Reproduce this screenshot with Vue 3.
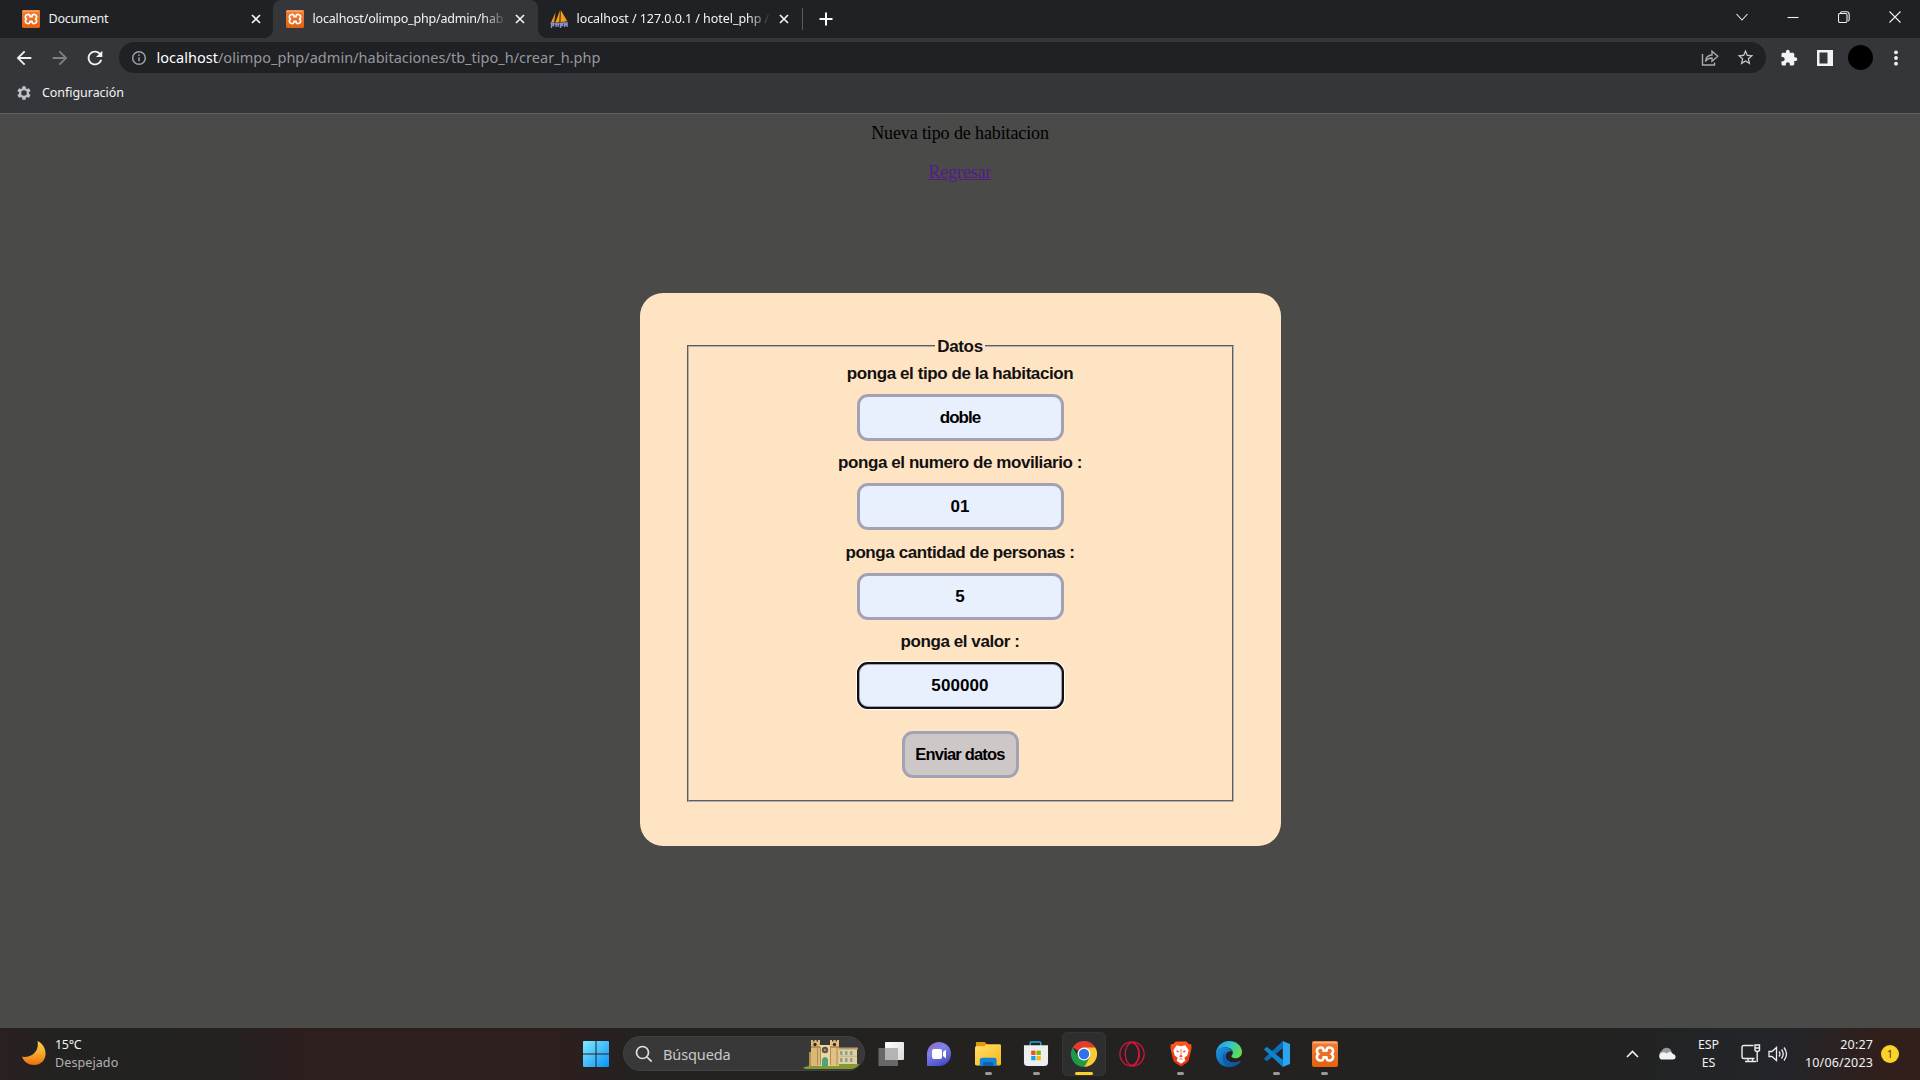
<script setup>
import { ref } from 'vue'

const fields = ref([
  { label: 'ponga el tipo de la habitacion', value: 'doble' },
  { label: 'ponga el numero de moviliario :', value: '01', tight: true },
  { label: 'ponga cantidad de personas :', value: '5', tight: true },
  { label: 'ponga el valor :', value: '500000', tight: true, focus: true },
])
</script>

<template>
  <div class="screen">
    <svg class="defs" width="0" height="0">
      <defs>
        <linearGradient id="xg" x1="0" y1="0" x2="0" y2="1"><stop offset="0" stop-color="#f0803a" /><stop offset="1" stop-color="#e2620f" /></linearGradient>
        <symbol id="xampp" viewBox="0 0 26 26">
          <rect width="26" height="26" rx="2" fill="url(#xg)" />
          <rect x="1" y="1" width="24" height="1.4" fill="#f7b283" />
          <path d="M8.300 6.500C10.500 6.200 11.500 7.400 11.500 9.700h3C14.500 7.400 15.500 6.200 17.700 6.500c4 .5 4.400 4.800 1.800 6.500 2.600 1.700 2.200 6-1.800 6.500-2.200.3-3.200-.9-3.200-3.200h-3c0 2.300-1 3.500-3.200 3.200-4-.5-4.400-4.800-1.800-6.500C3.900 11.300 4.300 7 8.300 6.500z" fill="none" stroke="#fff" stroke-width="2.500" stroke-linejoin="round" />
        </symbol>
      </defs>
    </svg>

    <header class="tabs">
      <div class="tab first">
        <svg class="fav" viewBox="0 0 26 26"><use href="#xampp" /></svg>
        <span class="title t1">Document</span>
        <svg class="x" viewBox="0 0 10 10"><path d="M1 1l8 8M9 1l-8 8" /></svg>
      </div>
      <div class="tab active">
        <svg class="fav" viewBox="0 0 26 26"><use href="#xampp" /></svg>
        <span class="title t2">localhost/olimpo_php/admin/hab</span>
        <svg class="x" viewBox="0 0 10 10"><path d="M1 1l8 8M9 1l-8 8" /></svg>
      </div>
      <div class="tab third">
        <svg class="fav" viewBox="0 0 18 18">
          <path d="M5.500 2.500L1 12.500h3.200zM10 .500L5.300 12.500h4zM10.700 0l6.500 11-6.700 1.500z" fill="#f89c0e" />
          <path d="M.5 12.300c4 1.400 10 1 17-.8l-.5 2c-5 1.500-12 1.500-16.500.5z" fill="#6c78af" />
          <path d="M1.500 18v-4.500h2v2h-2M6 12.500V17M6 14.500h2.200V17M10.500 18v-4.500h2v2h-2M14.500 17v-3.500l1.300 1.500 1.300-1.500V17" stroke="#8b94c4" stroke-width="1.300" fill="none" />
        </svg>
        <span class="title t3">localhost / 127.0.0.1 / hotel_php /</span>
        <svg class="x" viewBox="0 0 10 10"><path d="M1 1l8 8M9 1l-8 8" /></svg>
      </div>
      <i class="sep"></i>
      <svg class="plus" viewBox="0 0 14 14"><path d="M7 .5v13M.5 7h13" /></svg>
      <div class="winctl">
        <svg viewBox="0 0 12 12"><path d="M.5 3l5.500 6L11.500 3" /></svg>
        <svg viewBox="0 0 12 12"><path d="M.5 6.500h11" /></svg>
        <svg viewBox="0 0 12 12"><rect x=".5" y="2.500" width="8.500" height="9" rx="1.500" /><path d="M2.500 2.500V2Q2.500.700 4 .700h4.500Q11.200.700 11.200 3.500v5q0 1.200-1.200 1.500" /></svg>
        <svg viewBox="0 0 12 12"><path d="M.5.5l11 11M11.500.5l-11 11" /></svg>
      </div>
    </header>

    <div class="toolbar">
      <svg class="nav" viewBox="0 0 24 24"><path d="M20 11H7.830l5.590-5.590L12 4l-8 8 8 8 1.410-1.410L7.830 13H20v-2z" /></svg>
      <svg class="nav dim" viewBox="0 0 24 24"><path d="M4 11h12.170l-5.590-5.590L12 4l8 8-8 8-1.410-1.410L16.170 13H4v-2z" /></svg>
      <svg class="nav" viewBox="0 0 24 24"><path d="M17.650 6.350C16.200 4.900 14.210 4 12 4c-4.420 0-7.990 3.580-7.990 8s3.570 8 7.990 8c3.730 0 6.840-2.550 7.730-6h-2.080c-.820 2.330-3.040 4-5.650 4-3.310 0-6-2.690-6-6s2.690-6 6-6c1.660 0 3.140.690 4.220 1.780L13 11h7V4l-2.350 2.350z" /></svg>
      <div class="omni">
        <svg class="info" viewBox="0 0 16 16"><circle cx="8" cy="8" r="6.300" /><path d="M8 7.300v4M8 4.500v1.600" /></svg>
        <span class="url"><b>localhost</b>/olimpo_php/admin/habitaciones/tb_tipo_h/crear_h.php</span>
        <svg class="share" viewBox="0 0 18 18"><path d="M1.500 5v11h12v-2.500M4.500 12.500c.3-4.500 3-6.300 6.500-6.500V2.300l5.800 5-5.800 5V9c-3 0-5 1-6.500 3.500z" /></svg>
        <svg class="star" viewBox="0 0 24 24"><path d="M22 9.240l-7.190-.620L12 2 9.190 8.630 2 9.240l5.460 4.730L5.820 21 12 17.270 18.180 21l-1.630-7.030L22 9.240zM12 15.400l-3.760 2.270 1-4.280-3.320-2.880 4.380-.380L12 6.100l1.710 4.040 4.380.380-3.320 2.880 1 4.280L12 15.400z" /></svg>
      </div>
      <svg class="ext" viewBox="0 0 24 24"><path d="M20.500 11H19V7c0-1.100-.9-2-2-2h-4V3.500C13 2.120 11.880 1 10.500 1S8 2.120 8 3.500V5H4c-1.100 0-1.990.9-1.990 2v3.800H3.500c1.490 0 2.700 1.210 2.700 2.700s-1.210 2.700-2.700 2.700H2V20c0 1.100.9 2 2 2h3.800v-1.500c0-1.490 1.210-2.700 2.700-2.700 1.490 0 2.700 1.210 2.700 2.700V22H17c1.100 0 2-.9 2-2v-4h1.500c1.380 0 2.500-1.120 2.500-2.500S21.880 11 20.500 11z" /></svg>
      <svg class="panel" viewBox="0 0 16 16"><path fill-rule="evenodd" d="M0 0h16v16H0zM2.500 2.500v11h8v-11z" /></svg>
      <i class="avatar"></i>
      <svg class="dots" viewBox="0 0 4 16"><circle cx="2" cy="2.300" r="1.900" /><circle cx="2" cy="8" r="1.900" /><circle cx="2" cy="13.700" r="1.900" /></svg>
    </div>

    <div class="bookmarks">
      <svg viewBox="0 0 24 24"><path fill-rule="evenodd" d="M19.430 12.980c.040-.320.070-.640.070-.980s-.030-.660-.070-.980l2.110-1.650c.190-.150.240-.420.120-.640l-2-3.460c-.120-.220-.390-.300-.610-.220l-2.490 1c-.520-.400-1.080-.730-1.690-.980l-.380-2.650C14.460 2.180 14.250 2 14 2h-4c-.250 0-.460.180-.490.420l-.380 2.650c-.610.250-1.170.590-1.690.980l-2.490-1c-.230-.090-.490 0-.610.220l-2 3.460c-.130.220-.070.490.120.640l2.110 1.650c-.040.320-.070.650-.070.980s.030.660.070.980l-2.110 1.650c-.190.150-.240.420-.120.640l2 3.460c.120.220.390.300.610.220l2.490-1c.520.400 1.080.730 1.690.980l.380 2.650c.030.240.240.420.490.420h4c.250 0 .460-.180.490-.420l.380-2.650c.610-.250 1.170-.590 1.690-.980l2.490 1c.230.090.490 0 .610-.220l2-3.460c.120-.220.070-.490-.120-.640l-2.110-1.650zM12 16.200a4.200 4.200 0 1 1 0-8.400 4.200 4.200 0 0 1 0 8.400z" /></svg>
      <span>Configuración</span>
    </div>

    <main class="page">
      <p class="heading">Nueva tipo de habitacion</p>
      <a class="back">Regresar</a>
      <form class="card" @submit.prevent>
        <fieldset>
          <legend>Datos</legend>
          <div v-for="f in fields" :key="f.label" class="field">
            <label>{{ f.label }}</label>
            <div class="input" :class="{ focus: f.focus, digits: f.tight }">{{ f.value }}</div>
          </div>
          <button type="submit">Enviar datos</button>
        </fieldset>
      </form>
    </main>

    <footer class="taskbar">
      <div class="weather">
        <svg viewBox="0 0 24 24">
          <defs><linearGradient id="moon" x1="0" y1="0" x2="0" y2="1"><stop offset="0" stop-color="#fbd04b" /><stop offset=".5" stop-color="#f6aa2b" /><stop offset="1" stop-color="#ed6d12" /></linearGradient></defs>
          <path d="M15.500 0C27 5 26.500 24 12 24 6.500 24 2 21 0 15.800 10 17 17.500 10 15.500 0z" fill="url(#moon)" />
        </svg>
        <div><p>15°C</p><p class="muted">Despejado</p></div>
      </div>

      <div class="apps">
        <svg class="win" viewBox="0 0 26 26">
          <defs><linearGradient id="wg" x1="0" y1="0" x2="1" y2="1"><stop offset="0" stop-color="#7feaff" /><stop offset="1" stop-color="#0b91f5" /></linearGradient></defs>
          <path d="M0 1q0-1 1-1h11.500v12.500H0zM13.500 0H25q1 0 1 1v11.500H13.500zM0 13.500h12.500V26H1q-1 0-1-1zM13.500 13.500H26V25q0 1-1 1H13.500z" fill="url(#wg)" />
        </svg>
        <div class="search">
          <svg class="mag" viewBox="0 0 18 18"><circle cx="7.500" cy="7.500" r="6" /><path d="M12 12l4.700 4.700" /></svg>
          <span>Búsqueda</span>
          <svg class="castle" viewBox="0 0 56 32">
            <path d="M0 29.500Q26 22 56 26q-1 4-7 5H2z" fill="#7f9b32" />
            <path d="M34 10h20v16H34z" fill="#e3cfa4" /><path d="M34 9.500h21v2H34z" fill="#b99c6a" />
            <path d="M37 13h2.500v4H37zm5 0h2.500v4H42zm5 0h2.500v4H47zm-10 7h2.500v4H37zm5 0h2.500v4H42zm5 0h2.500v4H47z" fill="#87a68c" />
            <path d="M34 18.200h20" stroke="#c8b085" />
            <path d="M6 14h6v14H6z" fill="#b98f4e" />
            <path d="M8 2h2v1.500h1.500V2h2v1.500H15V2h2v26H8z" fill="#dcb878" />
            <path d="M27 2h2v1.500h1.500V2h2v1.500H34V2h2v26h-9z" fill="#e3c183" />
            <path d="M17 7h10v21H17z" fill="#edd7a1" />
            <path d="M8 9h9M27 9h9" stroke="#8d6534" /><path d="M14.500 9v18M34 9v18M17.500 9v18M27.500 9v18" stroke="#b08a50" />
            <circle cx="12" cy="6.500" r="1.700" fill="#3b2d20" /><circle cx="31.500" cy="6.500" r="1.700" fill="#3b2d20" />
            <circle cx="22" cy="12" r="3.200" fill="#5d5648" /><circle cx="22" cy="12" r="1.300" fill="#9b8d70" />
            <path d="M19 28v-7q3-4 6 0v7z" fill="#4fa37b" />
          </svg>
        </div>
        <svg class="task" viewBox="0 0 26 26">
          <defs><linearGradient id="tg" x1="0" y1="0" x2="1" y2="1"><stop offset="0" stop-color="#fff" /><stop offset="1" stop-color="#dadada" /></linearGradient></defs>
          <rect x="7" y="1" width="19" height="18" rx="1" fill="url(#tg)" /><path d="M.5 7H7v12h13v6H.500z" fill="#686868" /><path d="M7 7h13v12H7z" fill="#b4b4b4" />
        </svg>
        <svg class="chat" viewBox="0 0 24 24">
          <defs><linearGradient id="cg" x1="0" y1="0" x2=".5" y2="1"><stop offset="0" stop-color="#9a63b0" /><stop offset=".45" stop-color="#7b83eb" /><stop offset="1" stop-color="#4b4fc4" /></linearGradient></defs>
          <path d="M12 0a12 12 0 1 1 0 24H0V12A12 12 0 0 1 12 0z" fill="url(#cg)" /><rect x="5" y="7" width="10" height="10" rx="2" fill="#fff" /><path d="M16 10l3-2.500v9L16 14z" fill="#fff" />
        </svg>

        <div class="app run">
          <svg viewBox="0 0 27 27">
            <defs><linearGradient id="fg" x1="0" y1="0" x2="1" y2="1"><stop offset="0" stop-color="#ffdf6c" /><stop offset="1" stop-color="#f9b916" /></linearGradient></defs>
            <path d="M1 2q0-1 1-1h8l3 3v6H1z" fill="#dc9a10" /><path d="M0 7q0-1.500 1.500-1.500h8L12 3.500h13.500Q27 3.500 27 5v19q0 1.500-1.500 1.500h-24Q0 25.500 0 24z" fill="url(#fg)" />
            <path d="M5 26v-6q0-2.500 2.500-2.500H20q2.500 0 2.500 2.500v6z" fill="#1684d6" /><path d="M8.500 22H19v4H8.500z" fill="#0b62ae" />
          </svg>
        </div>
        <div class="app run">
          <svg viewBox="0 0 27 27">
            <path d="M7.500 6V2q0-1 1-1h9q1 0 1 1v4" fill="none" stroke="#29a8e0" stroke-width="1.500" />
            <path d="M1 4.500h25V22q0 4-4 4H5q-4 0-4-4z" fill="#eee" />
            <path d="M8.500 10h4.500v4.500H8.500z" fill="#f1511b" /><path d="M14 10h4.500v4.500H14z" fill="#7eba00" /><path d="M8.500 15.500h4.500V20H8.500z" fill="#0aa5ee" /><path d="M14 15.500h4.500V20H14z" fill="#fbb80c" />
          </svg>
        </div>
        <div class="app chrome">
          <svg viewBox="0 0 48 48">
            <path d="M24 24L3.200 12A24 24 0 0 1 44.800 12z" fill="#e33b2e" /><path d="M24 24V12h20.800A24 24 0 0 1 24 48l10.400-18z" fill="#fcc934" /><path d="M24 24l10.400 6L24 48A24 24 0 0 1 3.200 12l10.400 18z" fill="#1e9b48" />
            <circle cx="24" cy="24" r="12" fill="#fff" /><circle cx="24" cy="24" r="9.600" fill="#2d74ea" />
          </svg>
        </div>
        <div class="app">
          <svg viewBox="0 0 27 27" fill="none" stroke="#d4173f" stroke-width="1.300"><circle cx="13.500" cy="13.500" r="12.600" /><ellipse cx="13.500" cy="13.500" rx="7" ry="11.800" /><path d="M13 1.500C23 2.500 24 24 13.500 25.500M16 3c7 4 7 17 0 21" /></svg>
        </div>
        <div class="app run">
          <svg viewBox="0 0 27 27">
            <defs><linearGradient id="bg" x1="0" y1="0" x2="0" y2="1"><stop offset="0" stop-color="#ff5a1f" /><stop offset="1" stop-color="#e8300c" /></linearGradient></defs>
            <path d="M8 .5h11l2.500 2.500 2.500.500.500 3-.5 3-2.500 10.500q-.5 1.500-2 2.500l-6 4-6-4q-1.500-1-2-2.500L3 9.500l-.5-3 .5-3L5.500 3z" fill="url(#bg)" />
            <path d="M9 4.500l4.500 1 4.500-1 3.500 5-1.500 5.500-3 2.500 1 3-4.500 3-4.500-3 1-3-3-2.500L5.500 9.500z" fill="#fff" />
            <path d="M8 9.800l3.500.7-1 1.600zM19 9.800l-3.500.7 1 1.600zM13 8.500h1l-.2 6 1.700 1.300-2 1.200-2-1.200 1.700-1.300zM11 19l2.500-1 2.500 1" fill="#f2441a" />
          </svg>
        </div>
        <div class="app">
          <svg viewBox="0 0 27 27">
            <defs>
              <linearGradient id="e1" x1="0" y1="0" x2="1" y2=".4"><stop offset="0" stop-color="#1b8fdc" /><stop offset=".5" stop-color="#2fc0d6" /><stop offset="1" stop-color="#5fdc5a" /></linearGradient>
              <linearGradient id="e2" x1="0" y1="0" x2="1" y2="1"><stop offset="0" stop-color="#1d95e3" /><stop offset="1" stop-color="#0b4fa0" /></linearGradient>
            </defs>
            <path d="M0 13C0 6 6 0 13.500 0 21 0 27 5 27 11.500c0 4-3 6.500-6.500 6.500-3 0-5-1-4.500-2.300.7-1.200 1.500-2 1.500-3.700C17.500 9 14 6.500 10 6.500 5 6.500 1 9.500 0 13z" fill="url(#e1)" />
            <path d="M0 13.500C0 9.500 4 6.500 9 6.500c4 0 7 2 8 4.500-3-1.500-7 1-7 4.500 0 4 4.500 7 9 7 2.500 0 4.500-.7 5.700-1.500.600-.3 1 .300.600.900C23 25 18.500 27 13.500 27 6 27 0 21.500 0 13.500z" fill="url(#e2)" />
            <path d="M9.500 10C5.500 13.500 5.500 23.500 13 27c5.500 0 9.500-2 11.800-5.100.5-.8 0-1.200-.6-.900C15 24.500 6.500 19 9.500 10z" fill="#0c59a4" opacity=".8" />
          </svg>
        </div>
        <div class="app run">
          <svg viewBox="0 0 27 27">
            <path d="M19.500 0v7.500L3.500 20.500q-.6.500-1.200 0L.500 19q-.600-.6 0-1.200z" fill="#0a6fb8" /><path d="M19.500 27v-7.500L3.500 6.500q-.6-.5-1.200 0L.500 8q-.600.600 0 1.200z" fill="#0f83cd" /><path d="M19.500 0L27 3v21l-7.500 3z" fill="#2aa5ee" />
          </svg>
        </div>
        <div class="app run"><svg viewBox="0 0 26 26"><use href="#xampp" /></svg></div>
      </div>

      <div class="tray">
        <svg class="up" viewBox="0 0 13 8"><path d="M1 7l5.500-5.500L12 7" /></svg>
        <svg class="cloud" viewBox="0 0 19 13"><path d="M3 9a4 4 0 0 1 1.500-5A5.500 5.500 0 0 1 14 3l1 4z" fill="#999" /><path d="M4 12.500a3.800 3.800 0 0 1 0-6.500q3-1.500 5.500.5Q14 3.500 16 7q2.700.5 2.700 3-.3 2.500-3 2.500z" fill="#f2f2f2" /></svg>
        <div class="lang"><p>ESP</p><p>ES</p></div>
        <svg class="net" viewBox="0 0 20 19"><path d="M12.500 1.500H3Q1 1.500 1 3.500v9q0 2 2 2h10.500M4 17.500h11M7 14.500v3M11.500 14.500v3" /><path d="M14 1h4.500v5.500q-2.300 2-4.500 0zM14 4h4.500M16.200 8v10" /></svg>
        <svg class="vol" viewBox="0 0 20 16"><path d="M1 5.500v5h3l4.500 4V1.500L4 5.500zM11 5.500q2 2.500 0 5M13.500 3.500q3.500 4.500 0 9M16 1.500q5 6.500 0 13" /></svg>
        <div class="clock"><p>20:27</p><p>10/06/2023</p></div>
        <span class="badge">1</span>
      </div>
    </footer>
  </div>
</template>

<style>
body { background: #4a4a48; overflow: hidden; }
</style>

<style scoped>
* { box-sizing: border-box; }
p { margin: 0; }
svg { display: block; flex: none; }
.defs { position: absolute; }
.screen { width: 1920px; height: 1080px; display: flex; flex-direction: column; background: #4a4a48; font-family: "Noto Sans", "Open Sans", sans-serif; white-space: nowrap; overflow: hidden; }

.tabs { height: 38px; flex: none; display: flex; align-items: center; background: #202124; }
.tab { height: 38px; display: flex; align-items: center; color: #f1f3f4; font-size: 12.500px; letter-spacing: -.2px; }
.first { width: 273px; padding-left: 22px; }
.active { width: 265px; padding-left: 13px; background: #35363a; border-radius: 8px 8px 0 0; position: relative; }
.active::before, .active::after { content: ""; position: absolute; bottom: 0; width: 8px; height: 8px; }
.active::before { left: -8px; background: radial-gradient(circle at 0 0, transparent 7.500px, #35363a 8px); }
.active::after { right: -8px; background: radial-gradient(circle at 100% 0, transparent 7.500px, #35363a 8px); }
.third { width: 264px; padding-left: 12px; }
.fav { width: 18px; height: 18px; }
.title { margin-left: 8.500px; width: 194px; margin-right: 8.500px; line-height: 20px; }
.t2, .t3 { -webkit-mask-image: linear-gradient(90deg, #000 88%, transparent); mask-image: linear-gradient(90deg, #000 88%, transparent); }
.t2 { letter-spacing: -.18px; }
.t3 { letter-spacing: -.06px; }
.x { width: 10px; height: 10px; stroke: #f1f3f4; stroke-width: 1.700; }
.sep { width: 1px; height: 22px; background: #5a5c60; }
.plus { width: 14px; height: 14px; margin-left: 16px; stroke: #fff; stroke-width: 2; }
.winctl { margin-left: auto; display: flex; gap: 39px; padding: 0 19px 5px 0; }
.winctl svg { width: 12px; height: 12px; fill: none; stroke: #eee; stroke-width: 1.100; }

.toolbar { height: 39px; flex: none; display: flex; align-items: center; padding: 0 0 0 13px; background: #35363a; }
.nav { width: 22px; height: 22px; margin-right: 13.500px; fill: #f1f3f4; }
.dim { fill: #808185; }
.omni { width: 1647px; height: 31px; border-radius: 16px; background: #202124; display: flex; align-items: center; padding-left: 12px; margin-left: -.5px; }
.info { width: 16px; height: 16px; fill: none; stroke: #9aa0a6; stroke-width: 1.500; }
.url { margin: -1px 0 0 9.500px; font-size: 14.500px; color: #94989d; letter-spacing: .02px; flex: 1; line-height: 22px; }
.url b { font-weight: 400; color: #fff; }
.share { width: 18px; height: 18px; fill: none; stroke: #a9abae; stroke-width: 1.400; margin-right: 17px; }
.star { width: 19px; height: 19px; fill: #c4c7ca; margin-right: 11px; }
.ext { width: 18px; height: 18px; fill: #f1f3f4; margin-left: 14px; }
.panel { width: 16px; height: 16px; fill: #f1f3f4; margin-left: 19px; }
.avatar { width: 25px; height: 25px; border-radius: 50%; background: #000; margin-left: 15px; }
.dots { width: 4px; height: 16px; fill: #f1f3f4; margin-left: 21px; }

.bookmarks { height: 37px; flex: none; display: flex; align-items: center; padding: 0 0 5px 16px; background: #35363a; border-bottom: 1px solid #606164; color: #f1f3f4; font-size: 12.500px; letter-spacing: -.05px; }
.bookmarks svg { width: 16px; height: 16px; fill: #bdc1c6; margin-right: 10px; }

.page { flex: 1; display: flex; flex-direction: column; align-items: center; font: 18px "Liberation Serif", serif; letter-spacing: -.12px; color: #000; padding-top: 9px; }
.heading { line-height: 20px; }
.back { margin-top: 19px; line-height: 20px; color: #551a8b; text-decoration: underline; }
.card { width: 641px; height: 553px; margin-top: 111px; background: #ffe4c4; border-radius: 23px; padding: 43px 47px 44px; font: bold 17px "Liberation Sans", sans-serif; color: #111; }
fieldset { height: 466px; margin: 0; padding: 7px 0 0; border: 2px groove #b0b0b2; display: flex; flex-direction: column; align-items: center; }
legend { margin: 0 auto; padding: 2px 2px 0; line-height: 18px; letter-spacing: -.35px; }
.field { display: flex; flex-direction: column; align-items: center; width: 100%; margin-bottom: 11.300px; }
label { line-height: 20px; letter-spacing: -.42px; padding-top: 1px; margin-bottom: 10px; }
.input { width: 207px; height: 47px; line-height: 41px; text-align: center; letter-spacing: -1px; color: #000; background: #e8f0fe; border: 3px solid #a3a2b5; border-radius: 11px; }
.digits { letter-spacing: .1px; }
.focus { outline: 2px solid #101010; outline-offset: -2px; box-shadow: 0 0 0 1px #fff; }
button { width: 117px; height: 47px; margin-top: 11px; padding: 0; font: inherit; font-size: 16.500px; letter-spacing: -.8px; color: #000; background: #cec7c7; border: 3px solid #a3a2b5; border-radius: 11px; }

.taskbar { height: 52px; flex: none; display: flex; align-items: center; color: #f2f2f2; font-size: 12.500px; padding-bottom: 1px; background: linear-gradient(90deg, #2a2020 0, #222221 60px, #232221 220px, #2c1f1e 300px, #2c1f1e 560px, #242220 640px, #222221 1600px, #23252a 1780px, #301f1b 1880px); }
.weather { width: 583px; display: flex; align-items: center; padding-left: 22px; line-height: 18px; letter-spacing: -.3px; }
.weather svg { width: 24px; height: 24px; margin-right: 9px; margin-top: -2px; }
.weather .muted { color: #b4b2b1; letter-spacing: .1px; }
.apps { display: flex; align-items: center; }
.win { width: 26px; height: 26px; margin-right: 14px; }
.search { width: 242px; height: 35px; border-radius: 18px; background: #393838; border: 1px solid #424141; display: flex; align-items: center; padding-left: 11px; font-size: 14.500px; color: #c8c8c8; overflow: hidden; }
.mag { width: 18px; height: 18px; fill: none; stroke: #e0e0e0; stroke-width: 1.700; margin-right: 10px; }
.search span { flex: 1; letter-spacing: -.1px; }
.castle { width: 56px; height: 32px; margin-right: 5px; }
.task { width: 26px; height: 26px; margin-left: 13px; }
.chat { width: 24px; height: 24px; margin: 0 15px 0 23px; }
.app { width: 44px; height: 44px; margin-right: 4.150px; display: flex; align-items: center; justify-content: center; position: relative; border-radius: 5px; }
.app svg { width: 26px; height: 26px; }
.run::after, .chrome::after { content: ""; position: absolute; bottom: 1px; left: 18.500px; width: 7px; height: 3px; border-radius: 2px; background: #9a9a9a; }
.chrome { background: #2e2e2e; border: 1px solid #353535; }
.chrome::after { left: 12px; bottom: 0; width: 18px; background: #fcd12a; }
.tray { margin-left: auto; display: flex; align-items: center; padding-right: 21px; line-height: 18px; }
.up { width: 13px; height: 8px; fill: none; stroke: #f2f2f2; stroke-width: 1.600; margin-right: 18px; }
.cloud { width: 19px; height: 13px; }
.lang { width: 65px; text-align: center; letter-spacing: -.2px; }
.net { width: 20px; height: 19px; fill: none; stroke: #eee; stroke-width: 1.400; }
.vol { width: 20px; height: 16px; fill: none; stroke: #eee; stroke-width: 1.300; margin-left: 7px; }
.clock { width: 85px; text-align: right; letter-spacing: .15px; }
.badge { width: 18px; height: 18px; margin-left: 8px; border-radius: 50%; background: #fcd12a; color: #4a3c00; text-align: center; font-size: 11px; }
</style>
